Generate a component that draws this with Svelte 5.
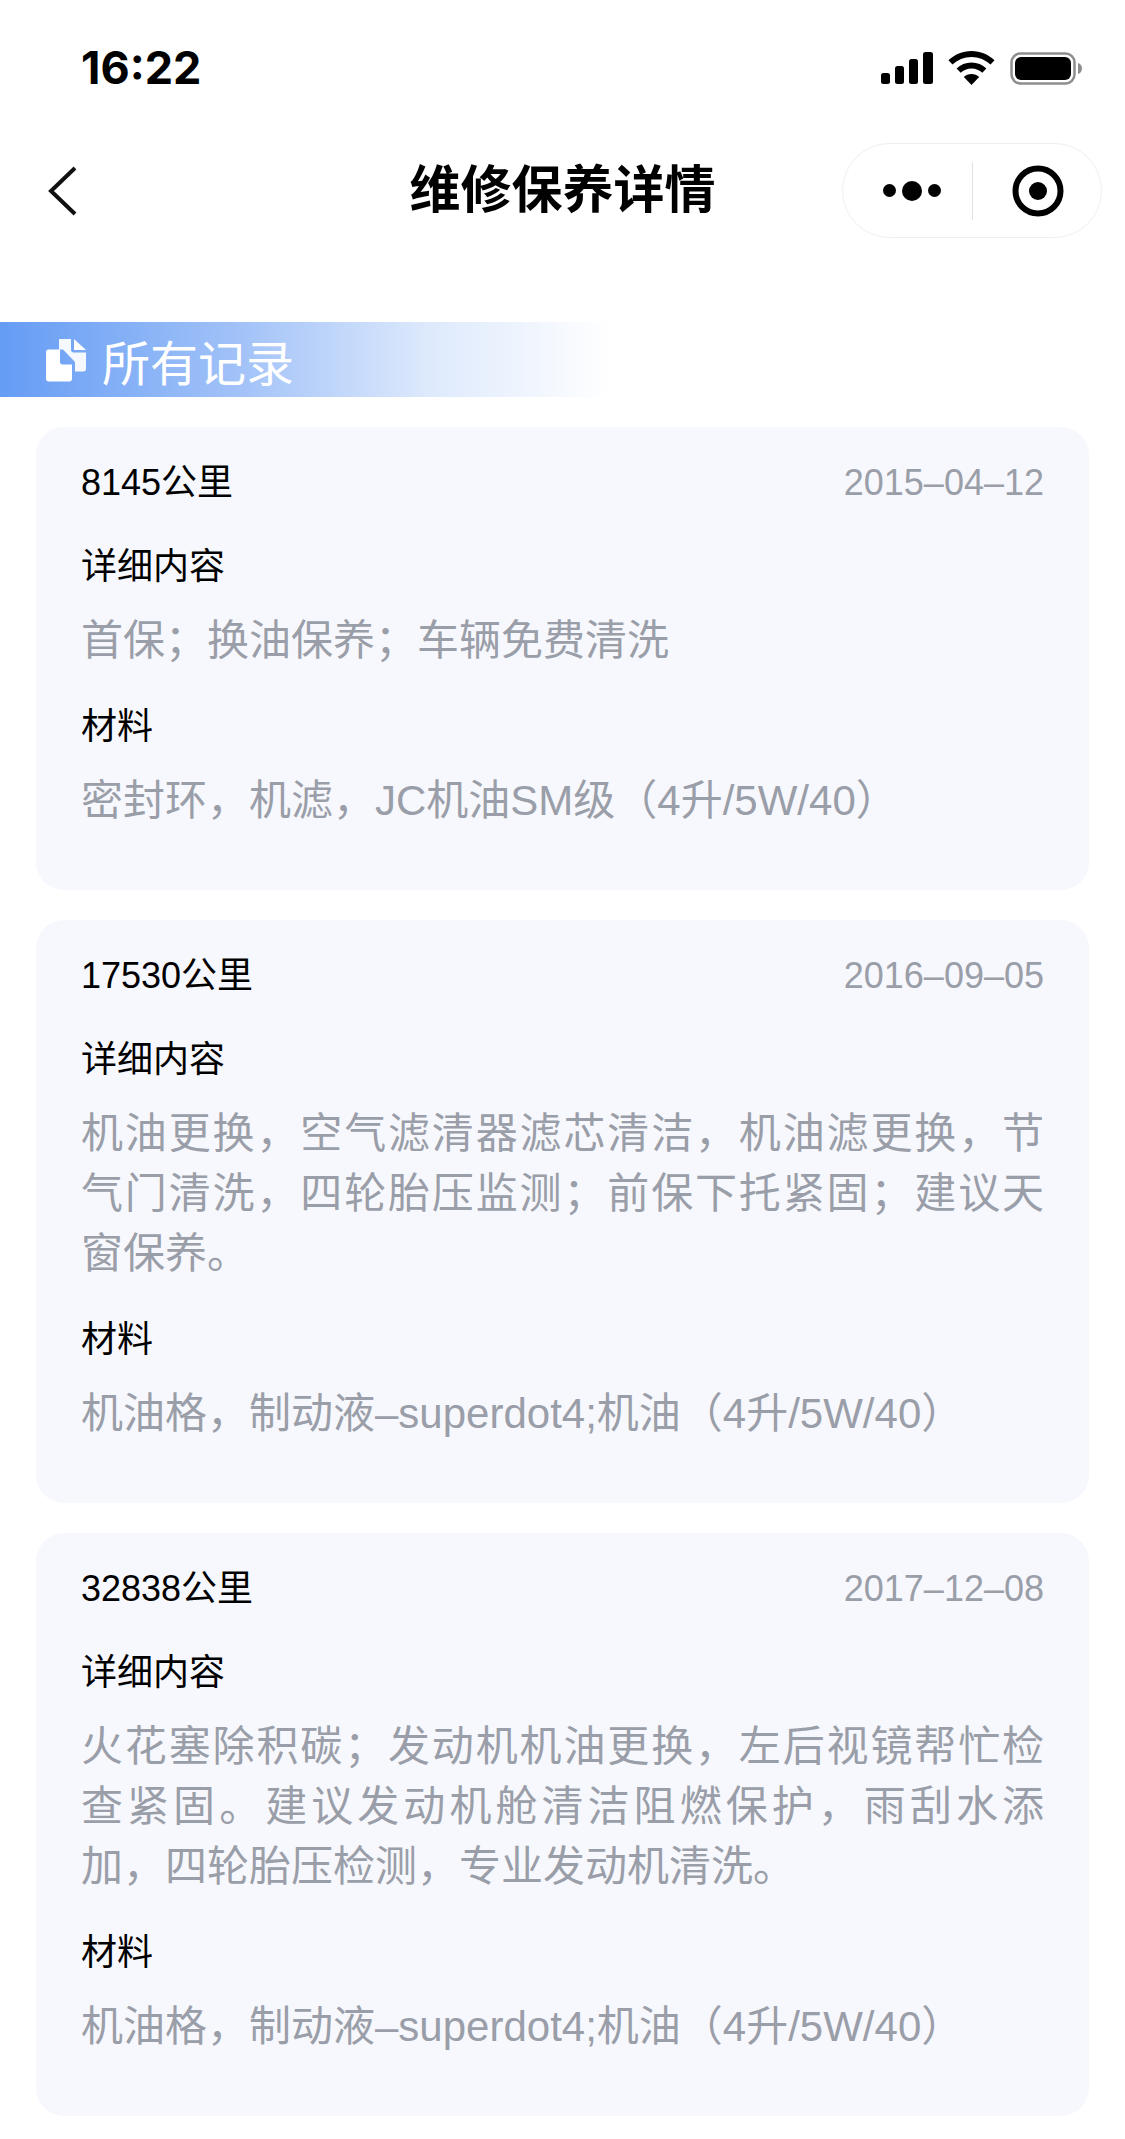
<script>
  const records = [
    {
      km: '8145公里',
      date: '2015–04–12',
      detail: '首保；换油保养；车辆免费清洗',
      material: '密封环，机滤，JC机油SM级（4升/5W/40）'
    },
    {
      km: '17530公里',
      date: '2016–09–05',
      detail: '机油更换，空气滤清器滤芯清洁，机油滤更换，节气门清洗，四轮胎压监测；前保下托紧固；建议天窗保养。',
      material: '机油格，制动液–superdot4;机油（4升/5W/40）'
    },
    {
      km: '32838公里',
      date: '2017–12–08',
      detail: '火花塞除积碳；发动机机油更换，左后视镜帮忙检查紧固。建议发动机舱清洁阻燃保护，雨刮水添加，四轮胎压检测，专业发动机清洗。',
      material: '机油格，制动液–superdot4;机油（4升/5W/40）'
    }
  ]
</script>

<div class="page">
  <div class="status">
    <span class="time">16:22</span>
    <div class="status_icons">
      <svg width="52" height="32" viewBox="0 0 52 32">
        <rect x="0" y="21" width="9" height="11" rx="2.5" />
        <rect x="14" y="14" width="9" height="18" rx="2.5" />
        <rect x="28" y="7" width="9" height="25" rx="2.5" />
        <rect x="42" y="0" width="10" height="32" rx="2.5" />
      </svg>
      <svg width="47" height="34" viewBox="0 0 47 34">
        <path d="M23.5 0C14.5 0 6.5 3.500 .5 9.300l4 4.300C9.400 8.900 16.100 6 23.500 6s14.100 2.900 19 7.600l4-4.300C40.500 3.500 32.500 0 23.500 0z" />
        <path d="M23.500 11.500c-5.800 0-11 2.300-14.900 6l4.100 4.300c2.800-2.700 6.600-4.300 10.800-4.300s8 1.600 10.800 4.300l4.100-4.300c-3.900-3.700-9.100-6-14.900-6z" />
        <path d="M23.500 23c-3 0-5.700 1.200-7.700 3.100l7.700 7.900 7.700-7.900c-2-1.900-4.700-3.100-7.700-3.100z" />
      </svg>
      <svg width="72" height="33" viewBox="0 0 72 33">
        <rect x="1.500" y="1.500" width="63" height="30" rx="9" fill="none" stroke="#8e8e90" stroke-width="2.500" />
        <rect x="5" y="5" width="56" height="23" rx="6" />
        <path d="M68 11c2.500.8 4 3 4 5.500s-1.500 4.700-4 5.500z" fill="#8e8e90" />
      </svg>
    </div>
  </div>

  <div class="nav">
    <svg class="back" width="30" height="50" viewBox="0 0 30 50">
      <path d="M27 2 3 25l24 23" fill="none" stroke="#111" stroke-width="4" />
    </svg>
    <div class="nav_title">维修保养详情</div>
    <div class="capsule">
      <div class="dots">
        <i class="dot"></i><i class="dot big"></i><i class="dot"></i>
      </div>
      <div class="divider"></div>
      <svg width="52" height="52" viewBox="0 0 52 52">
        <circle cx="26" cy="26" r="22.500" fill="none" stroke="#000" stroke-width="6" />
        <circle cx="26" cy="26" r="9" />
      </svg>
    </div>
  </div>

  <div class="banner">
    <svg width="44" height="44" viewBox="0 0 44 44">
      <path d="M2 14c0-1.500 1-2.500 2.500-2.500H16V24c0 1.500 1 2.500 2.500 2.500H28V41c0 1.500-1 2.500-2.500 2.500h-21C3 43.500 2 42.500 2 41z" fill="#fff" />
      <path d="M15 1h12v11c0 1.500 1 2.500 2.500 2.500H42V31c0 1.500-1 2.500-2.500 2.500H31V24l-12-12.500h-4z" fill="#fff" fill-opacity=".92" />
      <path d="M30 1l12 11H30z" fill="#fff" />
    </svg>
    <span>所有记录</span>
  </div>

  <div class="list">
    {#each records as record}
      <div class="card">
        <div class="card_head">
          <span class="km">{record.km}</span>
          <span class="date">{record.date}</span>
        </div>
        <div class="label first">详细内容</div>
        <div class="text">{record.detail}</div>
        <div class="label">材料</div>
        <div class="text">{record.material}</div>
      </div>
    {/each}
  </div>
</div>

<style>
  :global(body) {
    background: #fff;
  }

  .page {
    width: 1125px;
    height: 2139px;
    overflow: hidden;
    background: #fff;
    color: #000;
    font-family: "Liberation Sans", "Noto Sans CJK SC", sans-serif;
  }

  .status {
    height: 143px;
    padding: 0 43px 0 81px;
    box-sizing: border-box;
    display: flex;
    justify-content: space-between;
    align-items: flex-start;
  }

  .time {
    margin-top: 43px;
    font-size: 45px;
    line-height: 50px;
    font-weight: 700;
    font-family: "Inter", "Liberation Sans", sans-serif;
  }

  .status_icons {
    margin-top: 51px;
    display: flex;
    align-items: center;
    gap: 15px;
  }

  .nav {
    height: 95px;
    padding: 0 23px 0 48px;
    display: flex;
    align-items: center;
    justify-content: space-between;
    position: relative;
  }

  .back {
    display: block;
  }

  .nav_title {
    position: absolute;
    left: 0;
    right: 0;
    text-align: center;
    font-size: 51px;
    font-weight: 700;
    line-height: 60px;
    pointer-events: none;
  }

  .capsule {
    width: 260px;
    height: 95px;
    box-sizing: border-box;
    border: 1px solid #efeff1;
    border-radius: 48px;
    display: flex;
    align-items: center;
    padding-left: 40px;
  }

  .dots {
    width: 58px;
    display: flex;
    align-items: center;
    justify-content: space-between;
  }

  .dot {
    width: 13px;
    height: 13px;
    border-radius: 50%;
    background: #000;
  }

  .dot.big {
    width: 20px;
    height: 20px;
  }

  .divider {
    width: 1px;
    height: 58px;
    margin: 0 39px 0 31px;
    background: #e2e2e4;
  }

  .banner {
    margin-top: 84px;
    height: 75px;
    width: 610px;
    padding-left: 44px;
    box-sizing: border-box;
    display: flex;
    align-items: center;
    gap: 14px;
    color: #fff;
    font-size: 48px;
    background: linear-gradient(90deg, #659cf4 0%, #a3c3f8 40%, #dde9fc 70%, #ffffff 100%);
  }

  .list {
    margin-top: 30px;
    padding: 0 36px;
    display: flex;
    flex-direction: column;
    gap: 30px;
  }

  .card {
    padding: 32px 45px 59px;
    background: #f7f8fd;
    border-radius: 28px;
  }

  .card_head {
    display: flex;
    justify-content: space-between;
    line-height: 48px;
    font-size: 36px;
  }

  .date {
    color: #9a9ea8;
  }

  .label {
    margin-top: 32px;
    font-size: 36px;
    line-height: 48px;
  }

  .label.first {
    margin-top: 36px;
  }

  .text {
    margin-top: 20px;
    font-size: 42px;
    line-height: 60px;
    color: #9a9ea8;
    text-align: justify;
  }
</style>
